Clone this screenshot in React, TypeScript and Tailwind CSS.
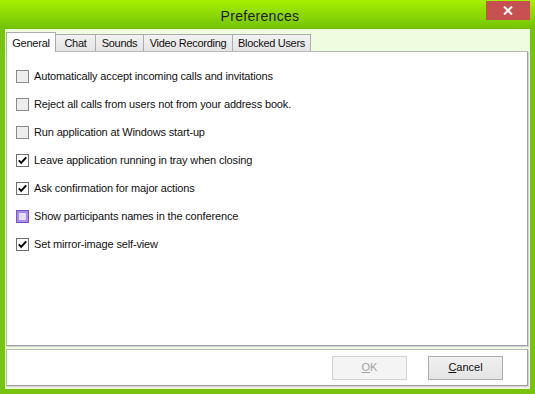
import React from 'react';

const TABS = [
  { label: 'General', width: 'w-[50px]', active: true },
  { label: 'Chat', width: 'w-[41px]', active: false },
  { label: 'Sounds', width: 'w-[49px]', active: false },
  { label: 'Video Recording', width: 'w-[90px]', active: false },
  { label: 'Blocked Users', width: 'w-[79px]', active: false },
];

type CheckState = 'off' | 'on' | 'focus';

const OPTIONS: { label: string; state: CheckState }[] = [
  { label: 'Automatically accept incoming calls and invitations', state: 'off' },
  { label: 'Reject all calls from users not from your address book.', state: 'off' },
  { label: 'Run application at Windows start-up', state: 'off' },
  { label: 'Leave application running in tray when closing', state: 'on' },
  { label: 'Ask confirmation for major actions', state: 'on' },
  { label: 'Show participants names in the conference', state: 'focus' },
  { label: 'Set mirror-image self-view', state: 'on' },
];

function CheckBox({ state }: { state: CheckState }) {
  if (state === 'focus') {
    return (
      <div className="flex h-[13px] w-[13px] shrink-0 items-center justify-center border border-[#7b4fd4] bg-[#a88ce8]">
        <div className="h-[7px] w-[7px] bg-[#e4def9]" />
      </div>
    );
  }
  return (
    <div
      className={
        state === 'on'
          ? 'flex h-[13px] w-[13px] shrink-0 items-center justify-center border border-[#6f6f6f] bg-white'
          : 'h-[13px] w-[13px] shrink-0 border border-[#8a8a8a] bg-[#ededed]'
      }
    >
      {state === 'on' && (
        <svg width="11" height="11" viewBox="0 0 11 11">
          <path d="M1.8 5.4 L4.2 7.9 L9.2 2.4" fill="none" stroke="#000" strokeWidth="2" />
        </svg>
      )}
    </div>
  );
}

export default function App() {
  return (
    <div className="flex h-[394px] w-[535px] flex-col bg-[#78c30e] font-['Liberation_Sans',Arial,sans-serif] text-[11px] text-[#111]">
      {/* title bar */}
      <div className="relative flex h-[29px] shrink-0 items-center justify-center bg-gradient-to-b from-[#a8f000] to-[#72c208] pr-[15px] pt-[3px]">
        <span className="text-[14px] tracking-[0.3px] text-[#1c1c1c]">Preferences</span>
        <div className="absolute right-[5px] top-[1px] flex h-[19px] w-[44px] items-center justify-center bg-[#c75050]">
          <svg width="10" height="9" viewBox="0 0 10 9">
            <path d="M1 0.5 L9 8.5 M9 0.5 L1 8.5" stroke="#fff" strokeWidth="2" />
          </svg>
        </div>
      </div>

      {/* client area */}
      <div className="mx-[5px] mb-[5px] flex flex-1 flex-col bg-[#eefcdf] pl-px pr-[2px] pt-[3px]">
        <div className="flex h-[19px] items-end">
          {TABS.map((tab) =>
            tab.active ? (
              <div
                key={tab.label}
                className={`${tab.width} relative z-10 -mb-px flex h-[20px] items-center justify-center border border-b-0 border-[#acacac] bg-white pt-[1px] tracking-[-0.2px]`}
              >
                {tab.label}
              </div>
            ) : (
              <div
                key={tab.label}
                className={`${tab.width} -ml-px flex h-[17px] items-center justify-center border border-b-0 border-[#acacac] bg-gradient-to-b from-[#f2f2f2] to-[#e4e4e4] pt-[1px] tracking-[-0.3px]`}
              >
                {tab.label}
              </div>
            )
          )}
        </div>

        <div className="flex-1 border border-[#b8b8b8] border-b-[#9f9f9f] border-r-[#9f9f9f] bg-white pl-[9px] pt-[10px] shadow-[1px_1px_0_#d4cfdb]">
          {OPTIONS.map((opt) => (
            <div key={opt.label} className="flex h-[28px] items-center gap-[5px]">
              <CheckBox state={opt.state} />
              <span className="tracking-[-0.15px]">{opt.label}</span>
            </div>
          ))}
        </div>

        <div className="mt-[3px] flex h-[37px] items-center justify-end gap-[21px] border border-[#b8b8b8] border-b-[#9f9f9f] border-r-[#9f9f9f] bg-white pr-[24px] shadow-[1px_1px_0_#d4cfdb]">
          <div className="flex h-[24px] w-[75px] items-center justify-center border border-[#d2d2d2] bg-[#f4f4f4] text-[#a2a2a2]">
            <span>
              <span className="underline">O</span>K
            </span>
          </div>
          <div className="flex h-[24px] w-[75px] items-center justify-center border border-[#acacac] bg-gradient-to-b from-[#f0f0f0] to-[#e4e4e4]">
            <span>
              <span className="underline">C</span>ancel
            </span>
          </div>
        </div>
        <div className="h-[3px]" />
      </div>
    </div>
  );
}
